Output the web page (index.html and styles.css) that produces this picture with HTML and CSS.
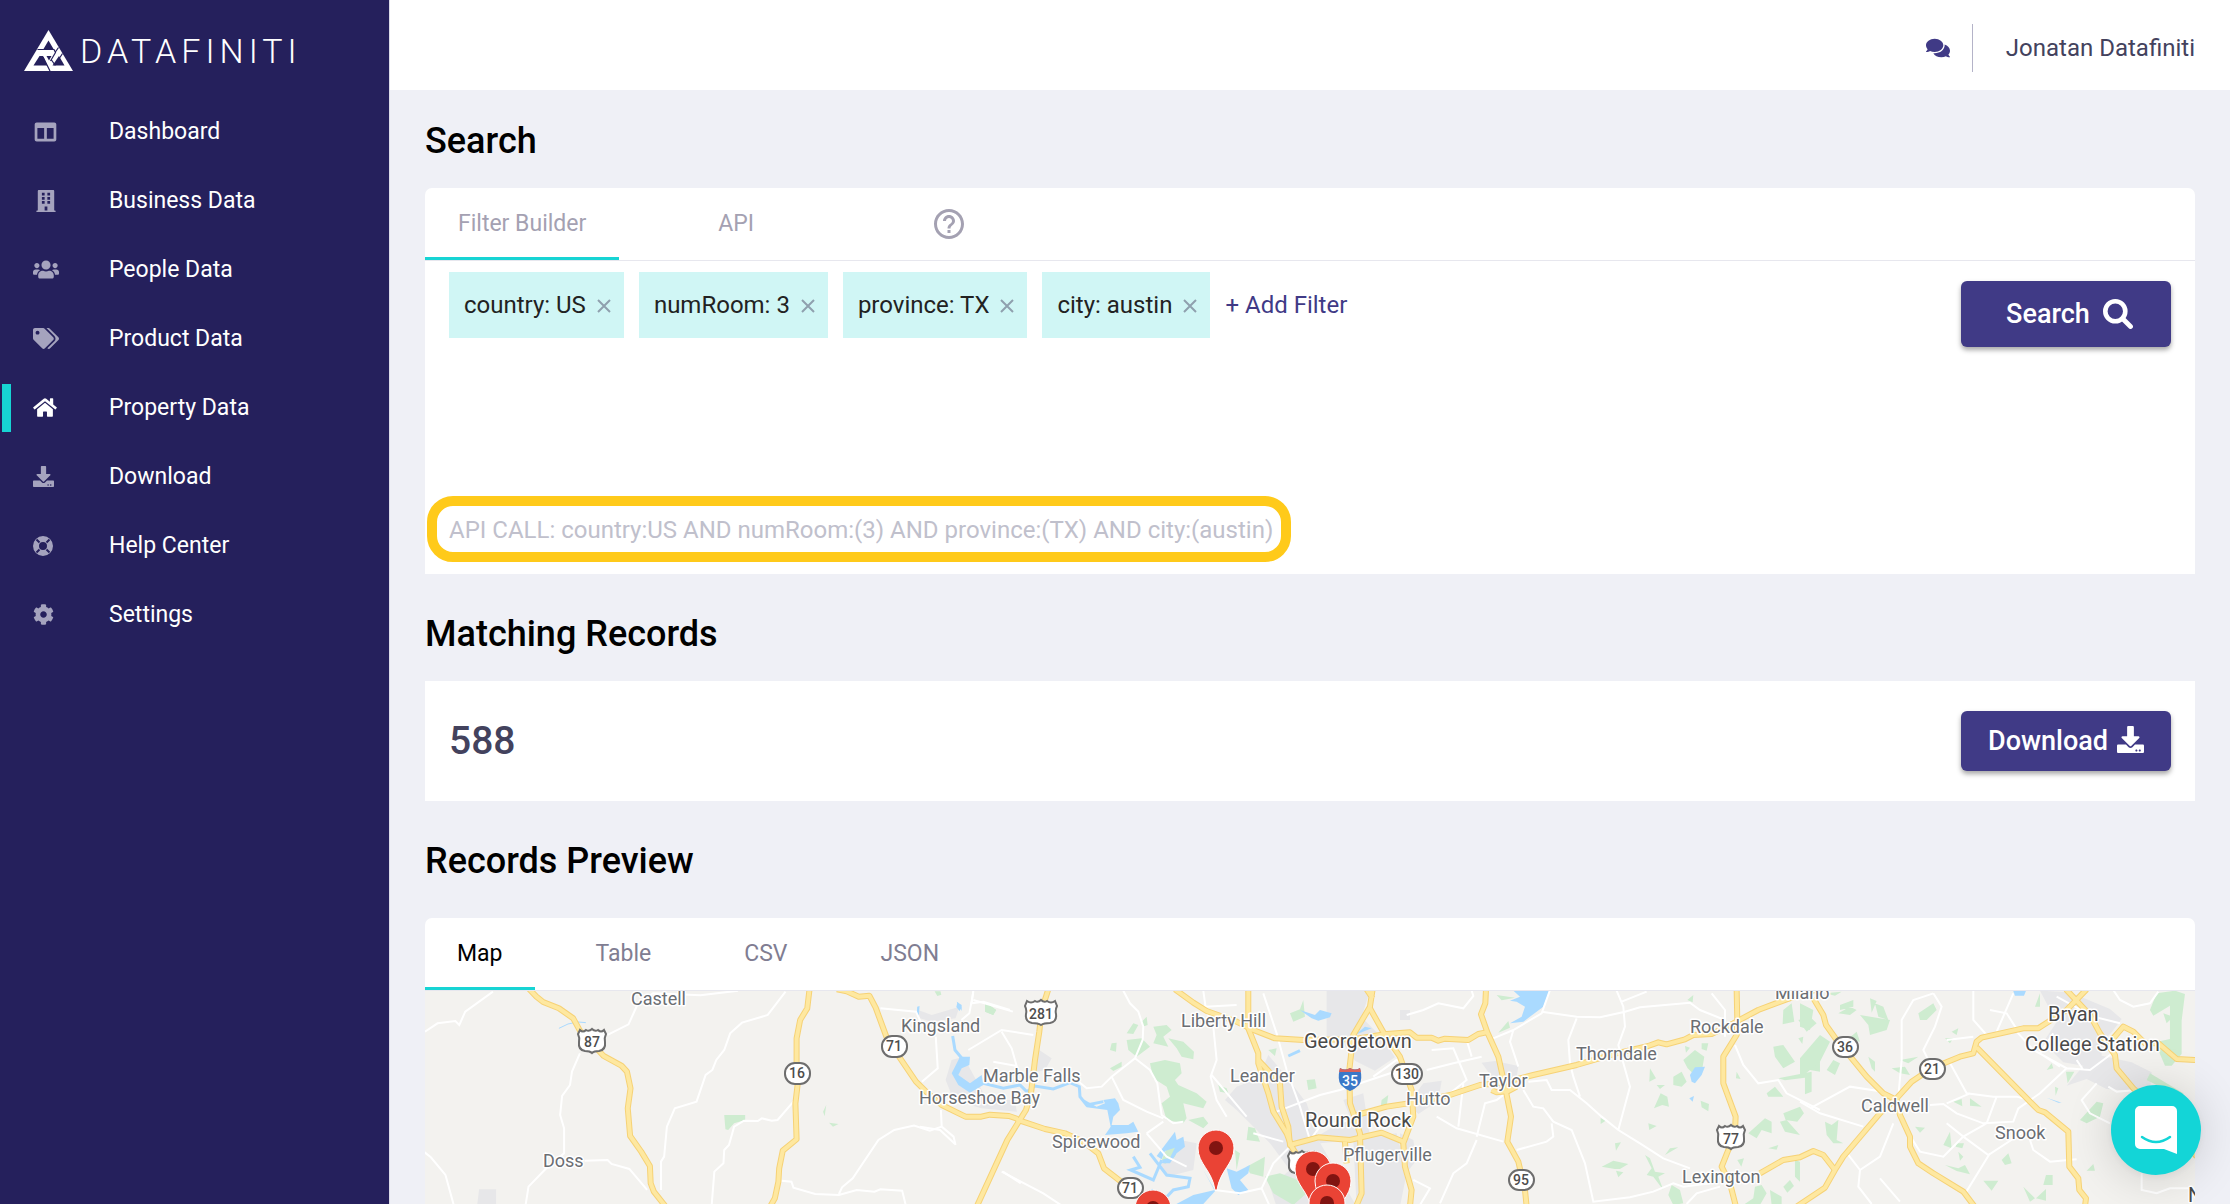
FILE: index.html
```html
<!DOCTYPE html>
<html lang="en">
<head>
<meta charset="utf-8">
<title>Datafiniti - Property Data</title>
<meta name="viewport" content="width=device-width, initial-scale=1">
<link rel="stylesheet" href="styles.css">
</head>
<body>
<svg class="sprite" aria-hidden="true">
  <symbol id="i-download" viewBox="0 0 512 512"><path d="M216 0h80c13.300 0 24 10.700 24 24v168h87.700c17.800 0 26.700 21.500 14.100 34.100L269.700 378.300c-7.500 7.500-19.800 7.500-27.300 0L90.100 226.100c-12.600-12.600-3.700-34.100 14.100-34.100H192V24c0-13.300 10.700-24 24-24zm296 376v112c0 13.300-10.700 24-24 24H24c-13.300 0-24-10.700-24-24V376c0-13.300 10.700-24 24-24h146.700l49 49c20.100 20.100 52.500 20.100 72.600 0l49-49H488c13.300 0 24 10.700 24 24zm-124 88c0-11-9-20-20-20s-20 9-20 20 9 20 20 20 20-9 20-20zm64 0c0-11-9-20-20-20s-20 9-20 20 9 20 20 20 20-9 20-20z"/></symbol>
  <symbol id="i-close" viewBox="0 0 14 14"><path d="M1 1l12 12M13 1L1 13" fill="none" stroke="currentColor" stroke-width="2"/></symbol>
</svg>
<div class="app">
  <aside class="sidebar">
    <a class="brand" href="#" aria-label="Datafiniti home">
      <svg class="brand-mark" viewBox="0 0 49 41" aria-hidden="true">
        <path d="M24.500 0L49 41H0z" fill="#fff"/>
        <g fill="#25205c"><path d="M24.500 10.500l5 8.500h-10z"/><path d="M9.500 35.500l6-9.500h3.500l4.500 9.500z"/><path d="M28.500 35.500h12l-5.500-9.500z"/><path d="M22.500 26h5l-2.500 4.500z"/></g>
        <g fill="none" stroke="#25205c" stroke-width="1.200"><path d="M13.500 19.500H30l1.500 3-5 8.500M19 27l7 14M38.500 23.500L31 35l-3.500-5M31 22.500l3.500-5"/></g>
      </svg>
      <span class="brand-name">DATAFINITI</span>
    </a>
    <nav class="nav" aria-label="Main">
      <a class="nav-item" href="#"><span class="nav-icon"><svg width="25" height="22" viewBox="-40 0 592 512"><path d="M464 32H48C21.490 32 0 53.490 0 80v352c0 26.510 21.490 48 48 48h416c26.510 0 48-21.490 48-48V80c0-26.510-21.490-48-48-48zM224 416H64V160h160v256zm224 0H288V160h160v256z"/></svg></span>Dashboard</a>
      <a class="nav-item" href="#"><span class="nav-icon"><svg width="26" height="22" viewBox="-80 0 608 512"><path fill-rule="evenodd" d="M436 480h-20V24c0-13-11-24-24-24H56C43 0 32 11 32 24v456H12c-7 0-12 5-12 12v20h448v-20c0-7-5-12-12-12zM128 64h64v64h-64zM256 64h64v64h-64zM128 160h64v64h-64zM256 160h64v64h-64zM128 256h64v64h-64zM256 256h64v64h-64zM192 384h64v96h-64z"/></svg></span>Business Data</a>
      <a class="nav-item" href="#"><span class="nav-icon"><svg width="26" height="21" viewBox="0 0 640 512"><path d="M96 224c35.300 0 64-28.700 64-64s-28.700-64-64-64-64 28.700-64 64 28.700 64 64 64zm448 0c35.300 0 64-28.700 64-64s-28.700-64-64-64-64 28.700-64 64 28.700 64 64 64zm32 32h-64c-17.600 0-33.500 7.100-45.100 18.600 40.300 22.100 68.900 62 75.100 109.400h66c17.700 0 32-14.300 32-32v-32c0-35.300-28.700-64-64-64zm-256 0c61.900 0 112-50.100 112-112S381.900 32 320 32 208 82.100 208 144s50.100 112 112 112zm76.800 32h-8.300c-20.800 10-43.900 16-68.500 16s-47.600-6-68.500-16h-8.300C179.600 288 128 339.600 128 403.200V432c0 26.500 21.500 48 48 48h288c26.500 0 48-21.500 48-48v-28.800c0-63.600-51.600-115.200-115.200-115.200zm-223.700-13.400C161.500 263.100 145.600 256 128 256H64c-35.300 0-64 28.700-64 64v32c0 17.700 14.300 32 32 32h65.900c6.300-47.400 34.900-87.300 75.200-109.400z"/></svg></span>People Data</a>
      <a class="nav-item" href="#"><span class="nav-icon"><svg width="26" height="21" viewBox="0 0 640 512"><path d="M497.941 225.941L286.059 14.059A48 48 0 0 0 252.118 0H48C21.490 0 0 21.490 0 48v204.118a48 48 0 0 0 14.059 33.941l211.882 211.882c18.744 18.745 49.136 18.746 67.882 0l204.118-204.118c18.745-18.745 18.745-49.137 0-67.882zM112 160c-26.510 0-48-21.490-48-48s21.490-48 48-48 48 21.490 48 48-21.490 48-48 48zm513.941 133.823L421.823 497.941c-18.745 18.745-49.137 18.745-67.882 0l-.36-.36L527.640 323.522c16.999-16.999 26.362-39.600 26.362-63.640s-9.362-46.641-26.362-63.640L331.397 0h48.721a48 48 0 0 1 33.941 14.059l211.882 211.882c18.745 18.745 18.745 49.137 0 67.882z"/></svg></span>Product Data</a>
      <a class="nav-item is-active" href="#" aria-current="page"><span class="nav-icon"><svg width="24" height="21" viewBox="0 0 576 512"><path d="M280.370 148.260L96 300.110V464a16 16 0 0 0 16 16l112.060-.29a16 16 0 0 0 15.920-16V368a16 16 0 0 1 16-16h64a16 16 0 0 1 16 16v95.640a16 16 0 0 0 16 16.050L464 480a16 16 0 0 0 16-16V300L295.670 148.260a12.190 12.190 0 0 0-15.300 0zM571.600 251.470L488 182.560V44.050a12 12 0 0 0-12-12h-56a12 12 0 0 0-12 12v72.610L318.470 43a48 48 0 0 0-61 0L4.340 251.470a12 12 0 0 0-1.600 16.900l25.500 31A12 12 0 0 0 45.150 301l235.220-193.740a12.190 12.190 0 0 1 15.300 0L530.900 301a12 12 0 0 0 16.900-1.600l25.500-31a12 12 0 0 0-1.700-16.930z"/></svg></span>Property Data</a>
      <a class="nav-item" href="#"><span class="nav-icon"><svg width="21" height="21"><use href="#i-download"/></svg></span>Download</a>
      <a class="nav-item" href="#"><span class="nav-icon"><svg width="20" height="20" viewBox="0 0 20 20"><circle cx="10" cy="10" r="7" fill="none" stroke="currentColor" stroke-width="6"/><path d="M3.500 3.500l3 3M16.500 3.500l-3 3M3.500 16.500l3-3M16.500 16.500l-3-3" stroke="#25205c" stroke-width="2"/></svg></span>Help Center</a>
      <a class="nav-item" href="#"><span class="nav-icon"><svg width="21" height="21" viewBox="0 0 512 512"><path d="M487.400 315.700l-42.600-24.600c4.300-23.200 4.300-47 0-70.200l42.600-24.600c4.900-2.800 7.100-8.600 5.500-14-11.100-35.600-30-67.800-54.700-94.600-3.800-4.100-10-5.100-14.800-2.300L380.800 110c-17.900-15.400-38.500-27.300-60.800-35.100V25.800c0-5.600-3.900-10.500-9.400-11.700-36.700-8.200-74.300-7.800-109.200 0-5.500 1.200-9.400 6.100-9.400 11.700V75c-22.200 7.900-42.800 19.800-60.800 35.100L88.700 85.500c-4.900-2.800-11-1.900-14.800 2.300-24.700 26.700-43.600 58.900-54.700 94.600-1.700 5.400.6 11.200 5.500 14L67.300 221c-4.300 23.200-4.300 47 0 70.200l-42.600 24.600c-4.900 2.800-7.100 8.600-5.500 14 11.100 35.600 30 67.800 54.700 94.600 3.800 4.100 10 5.100 14.800 2.300l42.600-24.600c17.900 15.400 38.500 27.300 60.800 35.100v49.200c0 5.600 3.900 10.500 9.400 11.700 36.700 8.200 74.300 7.800 109.200 0 5.500-1.200 9.400-6.100 9.400-11.700v-49.200c22.200-7.900 42.800-19.800 60.800-35.100l42.600 24.600c4.900 2.800 11 1.900 14.800-2.300 24.700-26.700 43.600-58.900 54.700-94.600 1.500-5.500-.7-11.300-5.600-14.100zM256 336c-44.100 0-80-35.900-80-80s35.900-80 80-80 80 35.900 80 80-35.900 80-80 80z"/></svg></span>Settings</a>
    </nav>
  </aside>

  <div class="page">
    <header class="topbar">
      <button class="icon-button" type="button" aria-label="Messages"><svg width="24" height="22" viewBox="0 0 576 512"><path d="M416 192c0-88.400-93.100-160-208-160S0 103.600 0 192c0 34.300 14.100 65.900 38 92-13.400 30.200-35.500 54.200-35.800 54.500-2.200 2.300-2.800 5.700-1.500 8.700S4.800 352 8 352c36.600 0 66.900-12.300 88.700-25 32.200 15.700 70.300 25 111.300 25 114.900 0 208-71.600 208-160zm122 220c23.900-26 38-57.700 38-92 0-66.900-53.500-124.200-129.300-148.100.9 6.600 1.300 13.300 1.300 20.100 0 105.900-107.700 192-240 192-10.800 0-21.300-.8-31.700-1.900C207.800 439.600 281.800 480 368 480c41 0 79.100-9.200 111.300-25 21.800 12.700 52.100 25 88.700 25 3.200 0 6.100-1.900 7.300-4.800 1.300-2.900.7-6.300-1.500-8.700-.3-.3-22.400-24.200-35.800-54.500z"/></svg></button>
      <span class="user">Jonatan Datafiniti</span>
    </header>

    <main class="content">
      <h1 class="title">Search</h1>
      <section class="card card--round">
        <div class="tabs tabs--search">
          <button class="tab is-open" type="button">Filter Builder</button>
          <button class="tab" type="button">API</button>
          <button class="tab tab--help" type="button" aria-label="Help"><svg width="36" height="36" viewBox="0 0 24 24"><path d="M11 18h2v-2h-2v2zm1-16C6.480 2 2 6.480 2 12s4.480 10 10 10 10-4.480 10-10S17.520 2 12 2zm0 18c-4.410 0-8-3.590-8-8s3.590-8 8-8 8 3.590 8 8-3.590 8-8 8zm0-14c-2.210 0-4 1.790-4 4h2c0-1.100.9-2 2-2s2 .9 2 2c0 2-3 1.750-3 5h2c0-2.250 3-2.500 3-5 0-2.210-1.790-4-4-4z"/></svg></button>
        </div>
        <div class="search-body">
          <div class="search-row">
            <div class="filters">
              <span class="chip">country: US<button class="chip-close" type="button" aria-label="Remove country"><svg width="14" height="14"><use href="#i-close"/></svg></button></span>
              <span class="chip">numRoom: 3<button class="chip-close" type="button" aria-label="Remove numRoom"><svg width="14" height="14"><use href="#i-close"/></svg></button></span>
              <span class="chip">province: TX<button class="chip-close" type="button" aria-label="Remove province"><svg width="14" height="14"><use href="#i-close"/></svg></button></span>
              <span class="chip">city: austin<button class="chip-close" type="button" aria-label="Remove city"><svg width="14" height="14"><use href="#i-close"/></svg></button></span>
              <button class="add-filter" type="button">+ Add Filter</button>
            </div>
            <button class="button button--search" type="button">Search<svg width="30" height="30" viewBox="0 0 30 30"><circle cx="12.300" cy="12.300" r="10" fill="none" stroke="currentColor" stroke-width="4.600"/><path d="M19.500 19.500l8 8" stroke="currentColor" stroke-width="4.800" stroke-linecap="round"/></svg></button>
          </div>
          <p class="api-call">API CALL: country:US AND numRoom:(3) AND province:(TX) AND city:(austin)</p>
        </div>
      </section>

      <h2 class="title">Matching Records</h2>
      <section class="card matches">
        <strong class="count">588</strong>
        <button class="button button--download" type="button">Download<svg width="27" height="27"><use href="#i-download"/></svg></button>
      </section>

      <h2 class="title title--loose">Records Preview</h2>
      <section class="card card--round preview">
        <div class="tabs tabs--preview">
          <button class="tab is-open" type="button">Map</button>
          <button class="tab" type="button">Table</button>
          <button class="tab" type="button">CSV</button>
          <button class="tab" type="button">JSON</button>
        </div>
        <svg class="map" role="img" aria-label="Map of matching properties near Austin, Texas">
          <defs>
            <g id="highways">
              <g transform="matrix(.3954 0 0 .3333 -25 -171)">
                <path d="M325 505L345 530 362 546 402 565 438 595 455 632 485 670 515 708 560 737 574 755 583 805 576 865 582 948 610 995 632 1038 634 1090 642 1115 672 1160"/>
                <path d="M1036 505L1030 565 1012 600 1003 655 1003 730 1006 790 1000 850 1003 958 968 992 959 1045 957 1085 948 1135 936 1160"/>
                <path d="M1105 508L1130 514 1160 530 1187 527 1203 563 1230 650 1262 710 1305 785 1335 820 1370 855 1430 890 1470 890 1492 884 1540 888 1562 897"/>
              </g>
              <g transform="translate(495 -31) scale(.3333)">
                <path d="M290 478L300 482 375 507 435 520 490 545 535 580 552 625 610 670 640 700"/>
                <path d="M385 88L365 150 358 215 345 300 333 400 318 450 262 540 170 740"/>
                <path d="M765 88L820 128 860 153 950 185 1000 210 1065 235 1150 240 1300 238 1400 222 1470 217 1490 233 1535 233 1555 242 1575 236 1645 240 1675 222 1700 217"/>
                <path d="M985 88L985 205 1015 280 1015 310 1045 400 1060 455 1100 520 1115 560 1140 600"/>
                <path d="M1015 300L1080 370 1085 440 1105 500 1110 555 1195 532 1290 540 1385 518 1450 545"/>
                <path d="M1358 88L1350 140 1300 225 1288 330 1290 430 1320 520 1325 700 1308 740M1340 88L1358 115"/>
                <path d="M1350 145L1395 225 1440 290 1475 390 1480 470 1450 550 1455 620 1475 690 1470 740"/>
                <path d="M1275 545L1280 610M1310 465L1400 440 1500 425 1590 405 1680 375 1750 368 1840 345 1970 315 2090 280 2185 258 2215 247 2240 253 2295 238 2320 225 2375 222 2440 190 2515 150 2600 118 2700 85"/>
              </g>
              <g transform="translate(975 -31) scale(.3333)">
                <path d="M258 88L256 130 243 163 262 217 295 290 315 380 333 470 322 545 355 605 375 690 380 740"/>
                <path d="M275 390L290 397 325 393 350 380"/>
                <path d="M1010 88L1012 180 1010 225 970 290 970 370 1007 470 1005 520 965 620 990 670 1008 740"/>
                <path d="M1080 640L1150 600 1200 592 1240 573 1270 585 1305 630"/>
                <path d="M1190 740L1275 683 1305 630 1330 590 1440 460 1490 415 1535 365 1595 325 1680 290 1720 280 1730 245 1745 233 1870 205 1915 205 2000 150 2060 88"/>
              </g>
              <g transform="translate(1375 -31) scale(.3333)">
                <path d="M40 115L70 165 78 195 110 240 200 350 250 400 290 420 300 465 330 530 330 560 355 610 400 640 490 695 524 740"/>
                <path d="M530 262L690 425 715 450 735 457 805 515 808 620 835 655 838 690 858 715 855 740"/>
                <path d="M798 88L870 165 900 220 945 285 950 325 1000 385 1100 480 1190 590"/>
                <path d="M940 235L970 200 1000 215 1035 250 1075 250 1130 297 1190 300"/>
              </g>
            </g>
            <path id="pin" d="M-1 42C-4 22-18 16-18 0A18 18 0 1 1 18 0C18 16 4 22 1 42z"/>
            <path id="us-shield" d="M-12-12q3 3 6 0 3 2 6-1 3 3 6 1 3 3 6 0l2 4q-2 4-1 8 1 8-6 9-5 0-7 2-2-2-7-2-7-1-6-9 1-4-1-8z"/>
            <path id="us-shield-wide" d="M-14-13q4 3 8 0 3 2 6-1 3 3 6 1 4 3 8 0l2 5q-2 4-1 8 1 8-6 9-6 0-9 2-3-2-9-2-7-1-6-9 1-4-1-8z"/>
          </defs>

          <g class="urban">
            <g transform="matrix(.3954 0 0 .3333 -25 -171)"><path d="M200 1108h43v50h-48zM1310 570l35 15 70-25-10 35-60 10-30-10zM1395 720l30-10 60 130 70 0 5 35-90-10-70-25-20-60z"/></g>
            <g transform="translate(495 -31) scale(.3333)"><path d="M1220 92h130l-25 80 60 60 40 60-60 40-60-30-40-60-45-10zM350 265l45 30-20 35-40 10zM950 380l-35 40 35 30 100 100 60 80-60 50 20 60h240l-10-200-100 10-40-120-60-80-55-65-30 70zM1190 530l100-60-20-50 60-20 20 130 80-10 30 120-20 100h-130zM720 620l60-80 50 10-10 80-80 20z"/></g>
            <g transform="translate(975 -31) scale(.3333)"><path d="M245 308l40-5 70 15-5 35-50 40-30-50zM70 370l55-8-10 60-60 40-30-30zM0 150l30 0 0 30-30 0zM0 520l40 20 10 60-40 50-10 0z"/></g>
            <g transform="translate(1375 -31) scale(.3333)"><path d="M720 92l90 5 120 50 35 30-30 40-30 30 0 40 90 20 60 30-5 60-130-10-60-30-60 20 50-60-60-10-60-60 40-60z"/></g>
          </g>

          <g class="parks">
            <g transform="matrix(.3954 0 0 .3333 -25 -171)"><path d="M820 885h53v15l-28 10-15 20-7-2zM1480 545l28 25-8 15-20-10zM1352 514l15 0 2 10-10 4zM1078 855l-8 20 4 14zM1085 908l24 4-14 8z"/></g>
            <g transform="translate(495 -31) scale(.3333)"><path d="M620 220l20-30 15 5-15 27zM620 240l45-5 25 25-40 30-25-20zM575 250l15-2-2 27-18-5zM665 185l15-15 3 25-15 5zM700 200l40-5 15 15-25 20 15 30-45-10 10-25zM745 235l45 10 32 30-2 23-35-8-15-25zM570 325l35-20 0 15-25 13zM690 310l45-10 45 10 5 30-20 20 10 15 55 25 30 25-10 20-60-15 10 45-10 15-50-10-15-50 25-20-10-30-40-25zM805 480l45-10 15 20-15 15zM895 375l25 10 5 15-25-5zM1110 160l30-12 10-28 5 50-35 15zM1160 360l25-2 5 27-25 5zM1045 270l25-5-5 23zM985 500l20 5 15 40-40-5zM1035 650l45-10 80 30 0 30-40 35-60-35zM725 600l15-35 35-5-10 30-30 22zM195 130l33 20-8 15-25-10zM980 620l55-30-5 60-40-10zM1385 420l20-15-5 35-18 5zM945 570l15 10-10 50z"/></g>
            <g transform="translate(975 -31) scale(.3333)"><path d="M290 105l55 8-40 8zM325 183l5 20-35 15zM862 120l18-15-2 22zM855 258l15 5-12 15zM905 250l20 0-5 22-15-5zM850 300l35-30 28 20-5 30-30 20-15-15zM820 350l25-15 15 30-15 15-25-5zM750 325l18 30-20 10zM770 375l25 0-15 12zM762 445l20-45 20 10 5 30-20-5zM902 422l25 10-2 22-20-12zM745 490l25 8-22 12zM602 474l15 8-15 10zM645 550l18-3-15 25zM795 585l15-20 25-3zM605 620l35-18 45 10-25 15-15 0zM648 632l22 5-15 15zM735 585l15 10 15 40 30 5-20 10 15 40-30-40-20-5 15-20zM815 675l25 15 10 40-30 5-15-30zM1010 335l12 22-14-2zM1012 600l20-5-8 25zM1150 150l25-20 8 55-35 8zM1195 180l35-10 20 20-30 25zM1120 260l30-5 35 50-35 20-25-35zM1135 355l100-20 0 60-20 8 0-50-60 8zM1225 310l35-5 0 30-30-5zM1150 460l50-20 12 20-20 25-35-5zM1045 520l50-45 20 10 0 35-30-10-15 25-20-12zM1140 485l20-5 40 45-45-10zM1100 400l25-20 25 30-45 0zM1065 680l20-5 15 25-20 35h-50l30-20zM1110 690l35 20 0 25h-30zM1150 680l20-20 12 18-20 20zM1185 600l15 5 0 60-15-15zM1105 565l30-10-5 14zM1195 235l15-5-3 22z"/></g>
            <g transform="translate(1375 -31) scale(.3333)"><path d="M0 130l40 20-10 60-30-10zM75 100l50-5-20 12zM120 135l40-15 0 20-40 10zM115 160l35-20 20 10-20 15zM210 115l20 8-15 35zM180 165l90 15-10 30-50 15-5-30zM225 130l25 10 15 40-30-10zM355 160l45-30 10 20-30 30-20 0zM140 240l30-25 10 30-30-5zM60 225l30 20-30 60-60 50 0-60zM100 300l20 10-15 35-25-15zM205 290l20 15 0 30-10-10zM300 300l55-10-30 20zM275 325l40-5 15 25-30-5zM455 215l20-10-5 20zM435 235l25 0-10 15zM460 425l25-8 2 22zM510 415l35 25-35-3zM345 500l30 3-15 15zM75 485l20 10 20-15-5 60 20 10-30 0-20-25zM450 515l5 50-25-10zM470 550l22 0-5 15-20-5zM475 575l15 15-10 12zM435 615l40 10 20-10 15 28-40-10zM605 600l20-20 10 30-20 5zM550 662l45 0-20 30zM738 645l20 0 0 30-28 0zM670 680l35 35-15 10zM708 715l30-28 0 35zM840 480l50-55 20 5-10 40-40 20zM765 380l10 5-8 22zM740 330l15-20 5 15zM798 335l25 0-20 35zM705 140l15-40 0 40zM860 632l20-20 5 20zM1050 150l20-50 55-8 30 10-10 80 0 100-30 35-20 0-30-70 45-10 0-100-50 30zM1090 160l30 10-20 20zM1050 340l100 60 0 40-70-60-40-20z"/></g>
          </g>

          <g class="water">
            <g transform="matrix(.3954 0 0 .3333 -25 -171)"><path d="M1308 560l6-2-2 30-5-5zM1410 545l10 18-5 10-8-12z"/><path class="stream stream--thin" d="M402 625L425 612 450 606 470 608"/></g>
            <g transform="translate(495 -31) scale(.3333)"><path d="M120 290l30 0-2 25-23 10-10 20 35 25 35-25 5 30-40 23-35-23-20-35 10-20zM110 125l15 10 0 18zM485 415l45 25 25-10-5-10 35-5 10 15 5 20-20 20-5 25 50 0 15-10 15 30-35 5-65 5 17-25-10-50-62-8zM765 515l5 25 20-10 5 30-25 20-20 30-25 0 5-12 20-5 15-30-30 10-10 25-15-10zM920 625l30 10 40-20-5 25-25 20 25 30-30 15-20-20zM850 630l35 60-65 15-60 32 90-5 35-38zM1140 150l45 15 15-15 35 10-5 12-35 10-20-7zM1335 200l20 5-50 20z"/><path class="stream" d="M98 228L105 270 130 300M190 370L250 385 300 375 320 395 345 378 400 387 450 368 478 380 480 410 500 435 550 425M640 590L660 622 632 630 700 660 725 600M690 580L740 645 810 655 805 680 760 690 720 732M700 690L660 720M1105 288L1140 272"/></g>
            <g transform="translate(975 -31) scale(.3333)"><path d="M340 92h108l-18 48-60 45-40 5 35-20 10-30-25-15-20-3 30-12zM870 345l15-23 30-2-10 25-20 25-10-5zM868 415l14-7-4 17z"/></g>
            <g transform="translate(1375 -31) scale(.3333)"><path d="M638 88h42l-8 19h-27zM740 413l45 15-10 0z"/></g>
          </g>

          <g class="streets">
            <g transform="matrix(.3954 0 0 .3333 -25 -171)"><path d="M63 635L95 610 140 603 150 615 165 575 235 515M455 700L435 755 430 795 410 828 405 885 415 925 415 1000 370 1045 325 1100 317 1160M60 995L78 1012 115 1065 137 1160M525 645L578 613 600 555 640 520 760 526 855 512M975 515L930 585 865 608 835 640 820 690 800 720 790 750 773 765 750 845 695 865 675 920 668 1010 660 1025 660 1110M467 1022L525 1020 535 1032 580 1047 625 1110M995 845L955 900 940 902 915 895 905 903 870 902 845 920 832 975 820 990 818 1030 795 1055 788 1160M965 1082L990 1085 995 1103 1050 1122 1110 1125 1155 1110 1200 1115 1215 1108 1270 1112 1280 1160M1110 1122L1118 1102 1145 1075 1210 960 1250 930 1300 917 1340 932 1370 920 1368 870M1320 785L1360 745 1355 650M1215 565L1305 575 1330 640M1370 920L1400 950 1405 975M1450 515L1440 580 1420 600M1450 540L1550 575M1525 1055L1570 1090"/></g>
            <g transform="translate(495 -31) scale(.3333)"><path d="M610 92L630 130 655 155 670 200 668 240 645 295 575 350 545 380 500 385 470 360M645 295L690 330 712 370 720 430 725 465 760 490 790 485M145 270L245 210 340 225M575 350L610 420 680 455 730 475M680 520L730 485M850 92L858 150 880 200 890 300 872 350 890 420 920 470M1030 100L1070 220 1100 330 1140 440 1170 540M1070 455L1200 405 1260 390 1440 330M885 690L960 700 1025 685 1060 610 1105 565M0 500L60 510 105 552M245 635L370 700 430 740M220 305L290 318 275 265 245 215M160 92L155 130 190 125 270 150M855 140L950 135M680 520L740 590 800 620M1025 685L1050 740M875 345L980 470M1170 540L1200 500 1290 480M1360 350L1430 300 1450 310M1000 520L1090 545"/></g>
            <g transform="translate(975 -31) scale(.3333)"><path d="M20 165L70 150 115 130 190 145 220 108 215 92M280 235L340 210 425 160 450 90M425 155L530 170 600 172 675 155 720 142 870 128 900 150 975 180M650 92L670 140 675 200 655 255 690 380 655 510M530 175L505 240 510 310 520 350 540 410M385 365L440 360 455 390 510 390 560 430 605 470 655 510 720 550 790 595 870 625M370 390L400 440 430 445 460 485 515 510 555 610 580 725 690 712 760 695 820 670 850 680 930 670M110 470L170 505 310 545M230 540L200 610 160 640 120 730M350 570L440 545 460 530 455 490M95 270L160 265 200 360 150 400M80 330L160 310 245 290M190 370L175 500M230 530L255 430 290 420 330 390M200 240L215 290M340 210L330 245 355 320M1005 255L1030 315 1075 370 1135 360 1160 400 1260 450M860 732L890 700 960 680M935 100L975 150 975 230M665 125L740 95M40 660L90 685 60 735"/></g>
            <g transform="translate(1375 -31) scale(.3333)"><path d="M400 100L340 120 305 180 305 300 295 410M400 100L425 140 405 200 370 270 395 320M445 300L500 400 580 410 650 410 690 420M30 445L150 380 250 395M0 425L60 460 190 500M390 435L430 432 470 460 550 490 640 485 655 445 720 400 800 325 700 270 650 215M440 430L510 400M300 480L360 575 430 590 490 530 560 490 590 410M570 580L490 710M440 490L490 530 565 585 680 510M690 540L700 570 750 605 830 598M145 585L180 630 175 680 215 732M180 630L240 590 280 490M240 655L300 725M800 325L870 330 950 270M770 110L880 170 960 190M520 92L520 180 560 225M590 215L640 100M655 215L620 160 570 150M890 370L845 420 870 460 930 490M925 380L950 395 1010 390M940 90L960 120 1000 140 1050 130 1075 95M1025 640L1025 690 1070 700 1110 685 1180 685M760 220L720 280 780 320M830 300L850 330M440 240L520 230"/></g>
          </g>

          <use href="#highways" class="road-edge"/>
          <use href="#highways" class="road-fill"/>

          <g transform="translate(-425 -991)">
            <g class="shield">
              <use href="#us-shield" x="592" y="1042"/><use href="#us-shield-wide" x="1041" y="1014"/><use href="#us-shield" x="1731" y="1138"/><use href="#us-shield" x="1302" y="1164"/>
              <rect x="785" y="1063" width="25" height="21" rx="10"/><rect x="882" y="1036" width="25" height="21" rx="10"/><rect x="1118" y="1178" width="25" height="20" rx="10"/><rect x="1392" y="1064" width="30" height="20" rx="10"/><rect x="1509" y="1170" width="25" height="20" rx="10"/><rect x="1833" y="1037" width="25" height="20" rx="10"/><rect x="1920" y="1059" width="25" height="20" rx="10"/>
            </g>
            <path d="M1340 1068q5 3 10 0 5 3 10 0 3 12-1 17-4 4-9 6-5-2-9-6-4-5-1-17z" fill="#3a78c8"/><path d="M1340 1068q5 3 10 0 5 3 10 0l1 4h-22z" fill="#d9635c"/>
            <g class="shield-text"><text x="592" y="1047">87</text><text x="1041" y="1019">281</text><text x="1731" y="1144">77</text><text x="797" y="1078">16</text><text x="894" y="1051">71</text><text x="1130" y="1193">71</text><text x="1407" y="1079">130</text><text x="1521" y="1185">95</text><text x="1845" y="1052">36</text><text x="1932" y="1074">21</text><text class="on-blue" x="1350" y="1086">35</text></g>
            <g class="town">
              <text x="631" y="1005">Castell</text><text x="901" y="1032">Kingsland</text><text x="983" y="1082">Marble Falls</text><text x="919" y="1104">Horseshoe Bay</text><text x="1052" y="1148">Spicewood</text><text x="543" y="1167">Doss</text><text x="1181" y="1027">Liberty Hill</text><text x="1230" y="1082">Leander</text><text x="1343" y="1161">Pflugerville</text><text x="1406" y="1105">Hutto</text><text x="1479" y="1087">Taylor</text><text x="1576" y="1060">Thorndale</text><text x="1690" y="1033">Rockdale</text><text x="1775" y="999">Milano</text><text x="1682" y="1183">Lexington</text><text x="1861" y="1112">Caldwell</text><text x="1995" y="1139">Snook</text>
            </g>
            <g class="town town--major"><text x="1304" y="1048">Georgetown</text><text x="1305" y="1127">Round Rock</text><text x="2048" y="1021">Bryan</text><text x="2025" y="1051">College Station</text><text x="2188" y="1202">Navasota</text></g>
            <g class="pins">
              <use href="#pin" x="1216" y="1148"/><circle cx="1216" cy="1148" r="7"/>
              <use href="#pin" x="1313" y="1169"/><circle cx="1313" cy="1169" r="7"/>
              <use href="#pin" x="1333" y="1181"/><circle cx="1333" cy="1181" r="7"/>
              <use href="#pin" x="1327" y="1203"/><circle cx="1327" cy="1203" r="7"/>
              <use href="#pin" x="1153" y="1208"/><circle cx="1153" cy="1208" r="7"/>
            </g>
          </g>
        </svg>
      </section>
    </main>
  </div>
</div>
<button class="messenger" type="button" aria-label="Open chat"><svg width="42" height="48" viewBox="0 0 42 48"><path d="M5 0h32a5 5 0 0 1 5 5v43l-13-5H5a5 5 0 0 1-5-5V5a5 5 0 0 1 5-5z" fill="#fff"/><path d="M7 31q14 10 28 0" fill="none" stroke="#13d5d7" stroke-width="2.500" stroke-linecap="round"/></svg></button>
</body>
</html>
```

FILE: styles.css
```css
*, *::before, *::after { box-sizing: border-box; }

body {
  margin: 0;
  background: #eff0f6;
  color: #000;
  font: 400 24px/30px Roboto, "Liberation Sans", sans-serif;
}

button {
  margin: 0;
  padding: 0;
  border: 0;
  background: none;
  color: inherit;
  font: inherit;
  cursor: pointer;
}

svg { display: block; fill: currentColor; }
a { color: inherit; text-decoration: none; }

.sprite { position: absolute; width: 0; height: 0; }

.app { display: flex; min-height: 100vh; }

/* Sidebar */
.sidebar {
  flex: 0 0 390px;
  border-right: 1px solid #dcdce8;
  background: #25205c;
  color: #fff;
}

.brand {
  display: flex;
  align-items: center;
  gap: 7px;
  height: 97px;
  padding: 4px 24px 0;
}

.brand-mark { flex: none; width: 49px; height: 41px; }
.brand-name { font-size: 34px; font-weight: 300; letter-spacing: 5px; line-height: 40px; }

.nav-item {
  position: relative;
  display: flex;
  align-items: center;
  height: 69px;
  padding-left: 33px;
  font-size: 23px;
}

.nav-icon { width: 76px; color: #a5a3be; }
.nav-item.is-active .nav-icon { color: #fff; }

.nav-item.is-active::before {
  position: absolute;
  top: 11px;
  left: 2px;
  width: 9px;
  height: 48px;
  background: #17d4d4;
  content: "";
}

/* Page frame */
.page { display: flex; flex: 1; flex-direction: column; min-width: 0; }

.topbar {
  display: flex;
  align-items: center;
  justify-content: flex-end;
  height: 90px;
  padding: 6px 35px 0;
  background: #fff;
}

.icon-button { margin-right: 22px; color: #403a86; }

.user {
  padding: 9px 0 9px 33px;
  border-left: 1px solid #b4b3c8;
  color: #43425d;
}

.content { display: flex; flex: 1; flex-direction: column; padding: 29px 35px 0; }

.title { margin: 38px 0 25px; font-size: 36px; font-weight: 500; line-height: 44px; }
h1.title { margin-top: 0; }
.title--loose { margin-bottom: 35px; }

.card { background: #fff; }
.card--round { overflow: hidden; border-radius: 7px 7px 0 0; }

/* Tabs */
.tabs { display: flex; border-bottom: 1px solid #e7e7ee; font-size: 23px; }
.tab { height: 72px; border-bottom: 3px solid transparent; color: #a4a1b2; }
.tab.is-open { border-color: #17d4d4; }
.tabs--search { gap: 66px; }
.tabs--search .tab { padding: 3px 33px 0; }
.tabs--search .tab--help { padding: 3px 0 0 78px; }
.tabs--preview { gap: 29px; }
.tabs--preview .tab { padding: 3px 32px 0; color: #807d92; }
.tabs--preview .tab.is-open { color: #000; }

/* Search card */
.search-body {
  display: flex;
  flex-direction: column;
  justify-content: space-between;
  align-items: flex-start;
  min-height: 313px;
  padding: 11px 24px 12px 2px;
}

.search-row {
  display: flex;
  justify-content: space-between;
  width: 100%;
  padding-left: 22px;
}

.filters { display: flex; flex-wrap: wrap; gap: 15px; }

.chip {
  display: flex;
  align-items: center;
  height: 66px;
  padding: 0 13px 0 15px;
  background: #d0f6f5;
  color: #222;
}

.chip-close { padding: 2px 0 0 11px; color: #8fa0ae; }
.add-filter { height: 66px; color: #403a86; }

.button {
  display: flex;
  align-items: center;
  justify-content: center;
  width: 210px;
  border-radius: 6px;
  background: #403a86;
  box-shadow: 0 3px 5px rgba(0, 0, 0, .35);
  color: #fff;
  font-size: 27px;
  font-weight: 500;
}

.button--search { gap: 13px; height: 66px; margin-top: 9px; padding-left: 7px; }
.button--download { gap: 9px; height: 60px; }
.button--download svg { margin-bottom: 4px; }

.api-call {
  margin: 0;
  padding: 9px 8px 7px 12px;
  border: 10px solid #ffca1a;
  border-radius: 26px;
  color: #c0c0cc;
}

/* Matching records */
.matches {
  display: flex;
  align-items: center;
  justify-content: space-between;
  min-height: 120px;
  padding: 0 24px;
}

.count { color: #43425d; font-size: 39px; font-weight: 500; line-height: 48px; }

/* Preview map */
.preview { display: flex; flex: 1; flex-direction: column; }
.map { flex: 1; width: 100%; min-height: 200px; background: #f3f2ef; }
.map path { vector-effect: non-scaling-stroke; }
.urban { fill: #e7e7e9; }
.parks { fill: #ceecd0; }
.water { fill: #aadaff; }
.stream { fill: none; stroke: #aadaff; stroke-width: 3px; }
.stream--thin { stroke-width: 1px; }
.streets { fill: none; stroke: #fff; stroke-width: 2px; }
.road-edge, .road-fill { fill: none; stroke-linejoin: round; }
.road-edge { stroke: #f6d276; stroke-width: 6px; }
.road-fill { stroke: #fee8a0; stroke-width: 4px; }
.shield { fill: #fff; stroke: #6d6d6d; stroke-width: 2px; }
.shield-text { fill: #4d4d4d; font-size: 14px; font-weight: 500; text-anchor: middle; }
.on-blue { fill: #fff; }

.town {
  fill: #6b6e73;
  stroke: #fff;
  stroke-width: 3px;
  stroke-linejoin: round;
  paint-order: stroke;
  font-size: 18px;
}

.town--major { fill: #4a4a4a; font-size: 20px; }
.pins use { fill: #ea4335; stroke: #fff; stroke-width: 1px; }
.pins circle { fill: #811411; }

.messenger {
  position: fixed;
  right: 29px;
  bottom: 29px;
  display: grid;
  place-items: center;
  width: 90px;
  height: 90px;
  border-radius: 50%;
  background: #13d5d7;
  box-shadow: 0 2px 9px rgba(0, 0, 0, .06), 0 3px 48px rgba(0, 0, 0, .16);
}
```
